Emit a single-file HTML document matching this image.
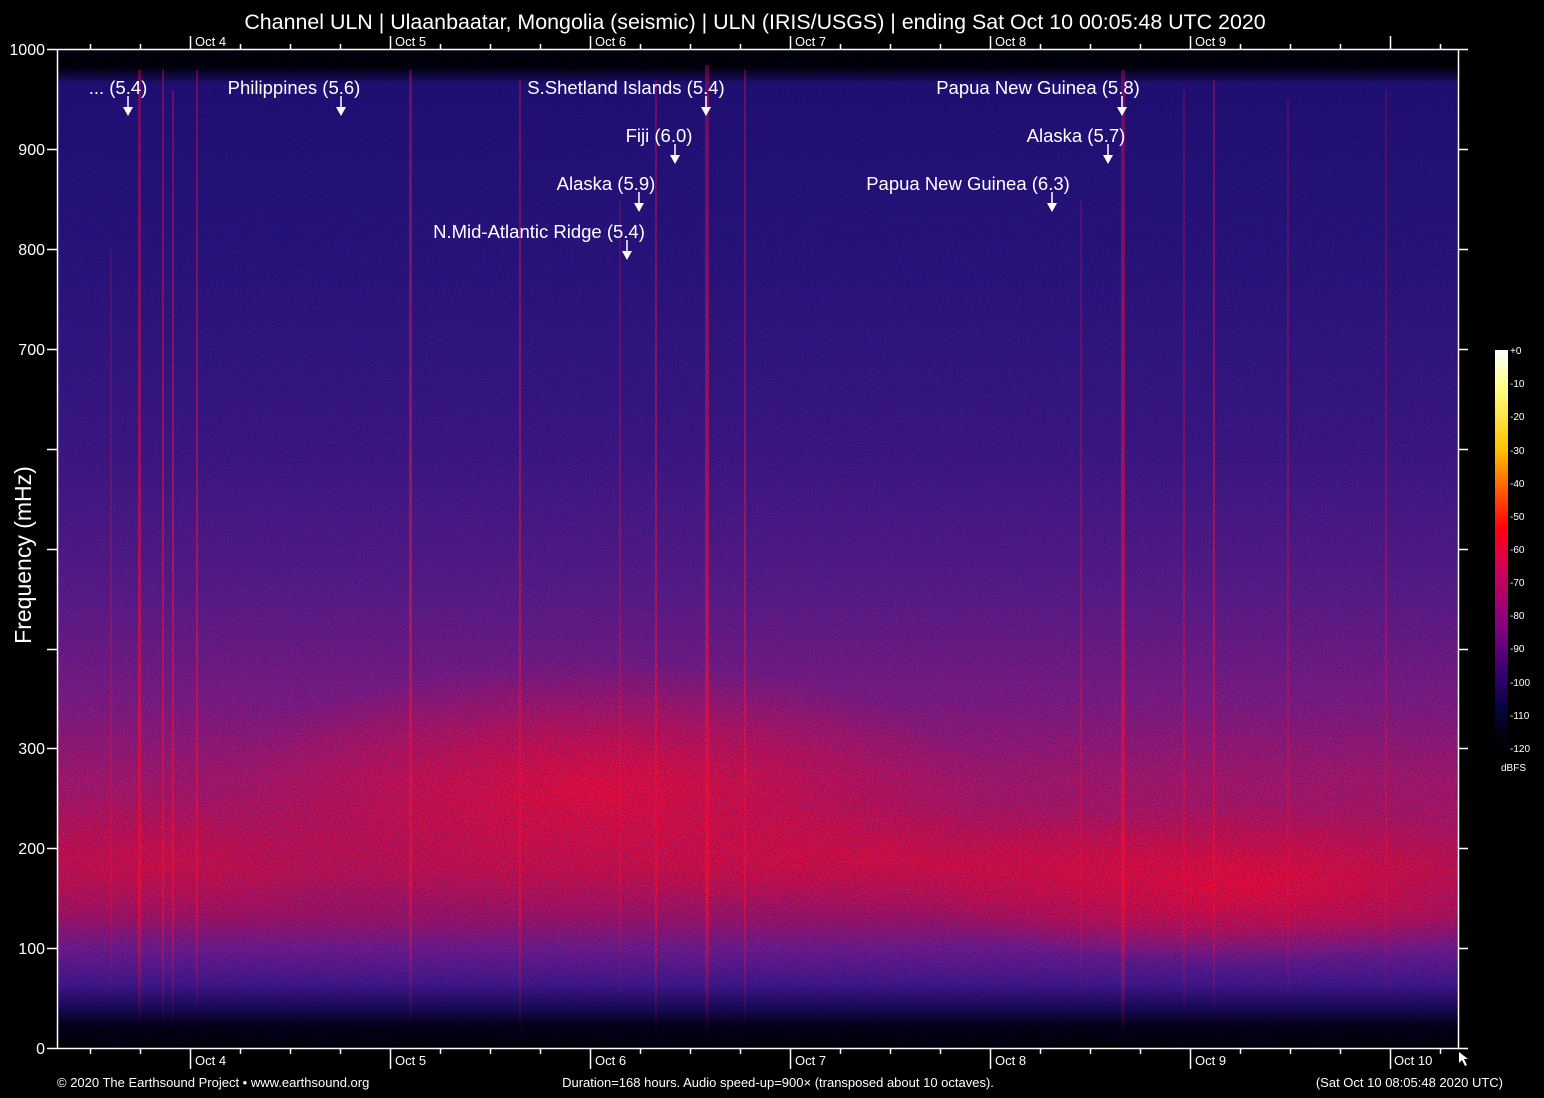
<!DOCTYPE html>
<html><head><meta charset="utf-8"><style>
html,body{margin:0;padding:0;background:#000;}
svg{display:block;}
text{font-family:"Liberation Sans",sans-serif;fill:#fff;}
</style></head><body>
<svg width="1544" height="1098" viewBox="0 0 1544 1098" xmlns="http://www.w3.org/2000/svg">
<defs>
<clipPath id="plot"><rect x="57" y="49" width="1401" height="999"/></clipPath>
<linearGradient id="bg" x1="0" y1="49" x2="0" y2="1048" gradientUnits="userSpaceOnUse">
<stop offset="0" stop-color="#000"/>
<stop offset="0.018" stop-color="#000"/>
<stop offset="0.035" stop-color="#221070"/>
<stop offset="0.2" stop-color="#2a1478"/>
<stop offset="0.4" stop-color="#3e1880"/>
<stop offset="0.55" stop-color="#5e1c84"/>
<stop offset="0.65" stop-color="#801c80"/>
<stop offset="0.73" stop-color="#a81868"/>
<stop offset="0.82" stop-color="#b81454"/>
<stop offset="0.87" stop-color="#a01464"/>
<stop offset="0.9" stop-color="#721c88"/>
<stop offset="0.935" stop-color="#461888"/>
<stop offset="0.96" stop-color="#1a0a50"/>
<stop offset="0.978" stop-color="#04000e"/>
<stop offset="1" stop-color="#000"/>
</linearGradient>
<radialGradient id="r1" cx="0.5" cy="0.5" r="0.5">
<stop offset="0" stop-color="#ff0a2a" stop-opacity="0.75"/>
<stop offset="1" stop-color="#ff0a2a" stop-opacity="0"/>
</radialGradient>
<linearGradient id="cb" x1="0" y1="0" x2="0" y2="1">
<stop offset="0" stop-color="#ffffff"/>
<stop offset="0.1" stop-color="#ffff80"/>
<stop offset="0.25" stop-color="#ffc000"/>
<stop offset="0.38" stop-color="#ff4000"/>
<stop offset="0.45" stop-color="#ff0010"/>
<stop offset="0.55" stop-color="#d0005a"/>
<stop offset="0.7" stop-color="#800080"/>
<stop offset="0.82" stop-color="#300070"/>
<stop offset="0.9" stop-color="#05053a"/>
<stop offset="1" stop-color="#000"/>
</linearGradient>
<linearGradient id="ev" x1="0" y1="0" x2="0" y2="1">
<stop offset="0" stop-color="#ff1050" stop-opacity="0.35"/>
<stop offset="0.85" stop-color="#ff1030" stop-opacity="0.7"/>
<stop offset="1" stop-color="#ff1030" stop-opacity="0"/>
</linearGradient>
<filter id="noise" x="0" y="0" width="100%" height="100%">
<feTurbulence type="fractalNoise" baseFrequency="0.9" numOctaves="1" seed="3"/>
<feColorMatrix values="0 0 0 0 0  0 0 0 0 0  0 0 0 0 0.2  0 0 0 -1.4 0.75"/>
</filter>
</defs>
<text x="755" y="29" font-size="21.4" text-anchor="middle">Channel ULN | Ulaanbaatar, Mongolia (seismic) | ULN (IRIS/USGS) | ending Sat Oct 10 00:05:48 UTC 2020</text>
<g clip-path="url(#plot)">
<rect x="57" y="49" width="1401" height="999" fill="url(#bg)"/>
<ellipse cx="600" cy="790" rx="380" ry="130" fill="url(#r1)"/>
<ellipse cx="1230" cy="885" rx="330" ry="80" fill="url(#r1)"/>
<ellipse cx="900" cy="860" rx="300" ry="60" fill="url(#r1)" opacity="0.6"/>
<ellipse cx="150" cy="860" rx="220" ry="70" fill="url(#r1)" opacity="0.5"/>
<g fill="url(#ev)">
<rect x="138" y="70" width="3" height="960"/>
<rect x="162" y="70" width="2" height="960"/>
<rect x="172" y="90" width="2" height="940"/>
<rect x="196" y="70" width="2" height="950"/>
<rect x="110" y="250" width="2" height="750" opacity="0.5"/>
<rect x="409" y="70" width="3" height="960"/>
<rect x="519" y="80" width="2" height="960"/>
<rect x="655" y="80" width="2" height="960"/>
<rect x="705" y="65" width="4" height="970"/>
<rect x="744" y="70" width="2" height="960"/>
<rect x="619" y="200" width="2" height="800" opacity="0.6"/>
<rect x="1121" y="70" width="4" height="970"/>
<rect x="1080" y="200" width="2" height="800" opacity="0.6"/>
<rect x="1183" y="90" width="2" height="940" opacity="0.7"/>
<rect x="1213" y="80" width="2" height="940"/>
<rect x="1287" y="100" width="2" height="920" opacity="0.6"/>
<rect x="1385" y="90" width="2" height="920" opacity="0.6"/>
</g>
<rect x="57" y="49" width="1401" height="999" filter="url(#noise)"/>
</g>
<g stroke="#fff" stroke-width="1.5" fill="none">
<line x1="47" y1="49.5" x2="1468" y2="49.5"/>
<line x1="47" y1="1048.5" x2="1468" y2="1048.5"/>
<line x1="57.5" y1="49" x2="57.5" y2="1048"/>
<line x1="1458.5" y1="49" x2="1458.5" y2="1048"/>
<path d="M47 149.5h10M47 249.5h10M47 349.5h10M47 449.5h10M47 549.5h10M47 649.5h10M47 748.5h10M47 848.5h10M47 948.5h10"/>
<path d="M1458 149.5h10M1458 249.5h10M1458 349.5h10M1458 449.5h10M1458 549.5h10M1458 649.5h10M1458 748.5h10M1458 848.5h10M1458 948.5h10"/>
<path d="M90.5 49v-5M140.5 49v-5M240.5 49v-5M290.5 49v-5M340.5 49v-5M440.5 49v-5M490.5 49v-5M540.5 49v-5M640.5 49v-5M690.5 49v-5M740.5 49v-5M840.5 49v-5M890.5 49v-5M940.5 49v-5M1040.5 49v-5M1090.5 49v-5M1140.5 49v-5M1240.5 49v-5M1290.5 49v-5M1340.5 49v-5M1440.5 49v-5"/>
<path d="M190.5 49v-13M390.5 49v-13M590.5 49v-13M790.5 49v-13M990.5 49v-13M1190.5 49v-13M1390.5 49v-13"/>
<path d="M90.5 1049v5M140.5 1049v5M240.5 1049v5M290.5 1049v5M340.5 1049v5M440.5 1049v5M490.5 1049v5M540.5 1049v5M640.5 1049v5M690.5 1049v5M740.5 1049v5M840.5 1049v5M890.5 1049v5M940.5 1049v5M1040.5 1049v5M1090.5 1049v5M1140.5 1049v5M1240.5 1049v5M1290.5 1049v5M1340.5 1049v5M1440.5 1049v5"/>
<path d="M190.5 1049v20M390.5 1049v20M590.5 1049v20M790.5 1049v20M990.5 1049v20M1190.5 1049v20M1390.5 1049v20"/>
</g>
<g font-size="16" text-anchor="end">
<text x="45" y="55">1000</text><text x="45" y="155">900</text><text x="45" y="255">800</text><text x="45" y="355">700</text>
<text x="45" y="754">300</text><text x="45" y="854">200</text><text x="45" y="954">100</text><text x="45" y="1054">0</text>
</g>
<g font-size="13">
<text x="195" y="46">Oct  4</text><text x="395" y="46">Oct  5</text><text x="595" y="46">Oct  6</text><text x="795" y="46">Oct  7</text><text x="995" y="46">Oct  8</text><text x="1195" y="46">Oct  9</text>
<text x="195" y="1065">Oct  4</text><text x="395" y="1065">Oct  5</text><text x="595" y="1065">Oct  6</text><text x="795" y="1065">Oct  7</text><text x="995" y="1065">Oct  8</text><text x="1195" y="1065">Oct  9</text><text x="1394" y="1065">Oct 10</text>
</g>
<path d="M1459 1052l0 11 3-3 3 6 2-1-3-6 4 0z" fill="#fff"/>
<text transform="translate(31,555) rotate(-90)" font-size="23" text-anchor="middle">Frequency (mHz)</text>
<g font-size="13">
<text x="57" y="1087">© 2020 The Earthsound Project • www.earthsound.org</text>
<text x="778" y="1087" text-anchor="middle">Duration=168 hours. Audio speed-up=900× (transposed about 10 octaves).</text>
<text x="1503" y="1087" text-anchor="end">(Sat Oct 10 08:05:48 2020 UTC)</text>
</g>
<rect x="1495" y="350" width="13" height="398" fill="url(#cb)"/>
<g font-size="10" fill="#ddd">
<text x="1510" y="354">+0</text><text x="1510" y="387">-10</text><text x="1510" y="420">-20</text><text x="1510" y="454">-30</text><text x="1510" y="487">-40</text><text x="1510" y="520">-50</text><text x="1510" y="553">-60</text><text x="1510" y="586">-70</text><text x="1510" y="619">-80</text><text x="1510" y="652">-90</text><text x="1510" y="686">-100</text><text x="1510" y="719">-110</text><text x="1510" y="752">-120</text>
<text x="1501" y="771">dBFS</text>
</g>
<g font-size="18.5">
<text x="118" y="94" text-anchor="middle">... (5.4)</text>
<text x="294" y="94" text-anchor="middle">Philippines (5.6)</text>
<text x="626" y="94" text-anchor="middle">S.Shetland Islands (5.4)</text>
<text x="659" y="142" text-anchor="middle">Fiji (6.0)</text>
<text x="606" y="190" text-anchor="middle">Alaska (5.9)</text>
<text x="539" y="238" text-anchor="middle">N.Mid-Atlantic Ridge (5.4)</text>
<text x="1038" y="94" text-anchor="middle">Papua New Guinea (5.8)</text>
<text x="1076" y="142" text-anchor="middle">Alaska (5.7)</text>
<text x="968" y="190" text-anchor="middle">Papua New Guinea (6.3)</text>
</g>
<g stroke="#fff" stroke-width="1.5">
<line x1="128" y1="96" x2="128" y2="108"/><line x1="341" y1="96" x2="341" y2="108"/><line x1="706" y1="96" x2="706" y2="108"/>
<line x1="675" y1="144" x2="675" y2="156"/><line x1="639" y1="192" x2="639" y2="204"/><line x1="627" y1="240" x2="627" y2="252"/>
<line x1="1122" y1="96" x2="1122" y2="108"/><line x1="1108" y1="144" x2="1108" y2="156"/><line x1="1052" y1="192" x2="1052" y2="204"/>
</g>
<g fill="#fff">
<path d="M123 107h10l-5 9z"/><path d="M336 107h10l-5 9z"/><path d="M701 107h10l-5 9z"/>
<path d="M670 155h10l-5 9z"/><path d="M634 203h10l-5 9z"/><path d="M622 251h10l-5 9z"/>
<path d="M1117 107h10l-5 9z"/><path d="M1103 155h10l-5 9z"/><path d="M1047 203h10l-5 9z"/>
</g>
</svg>
</body></html>
